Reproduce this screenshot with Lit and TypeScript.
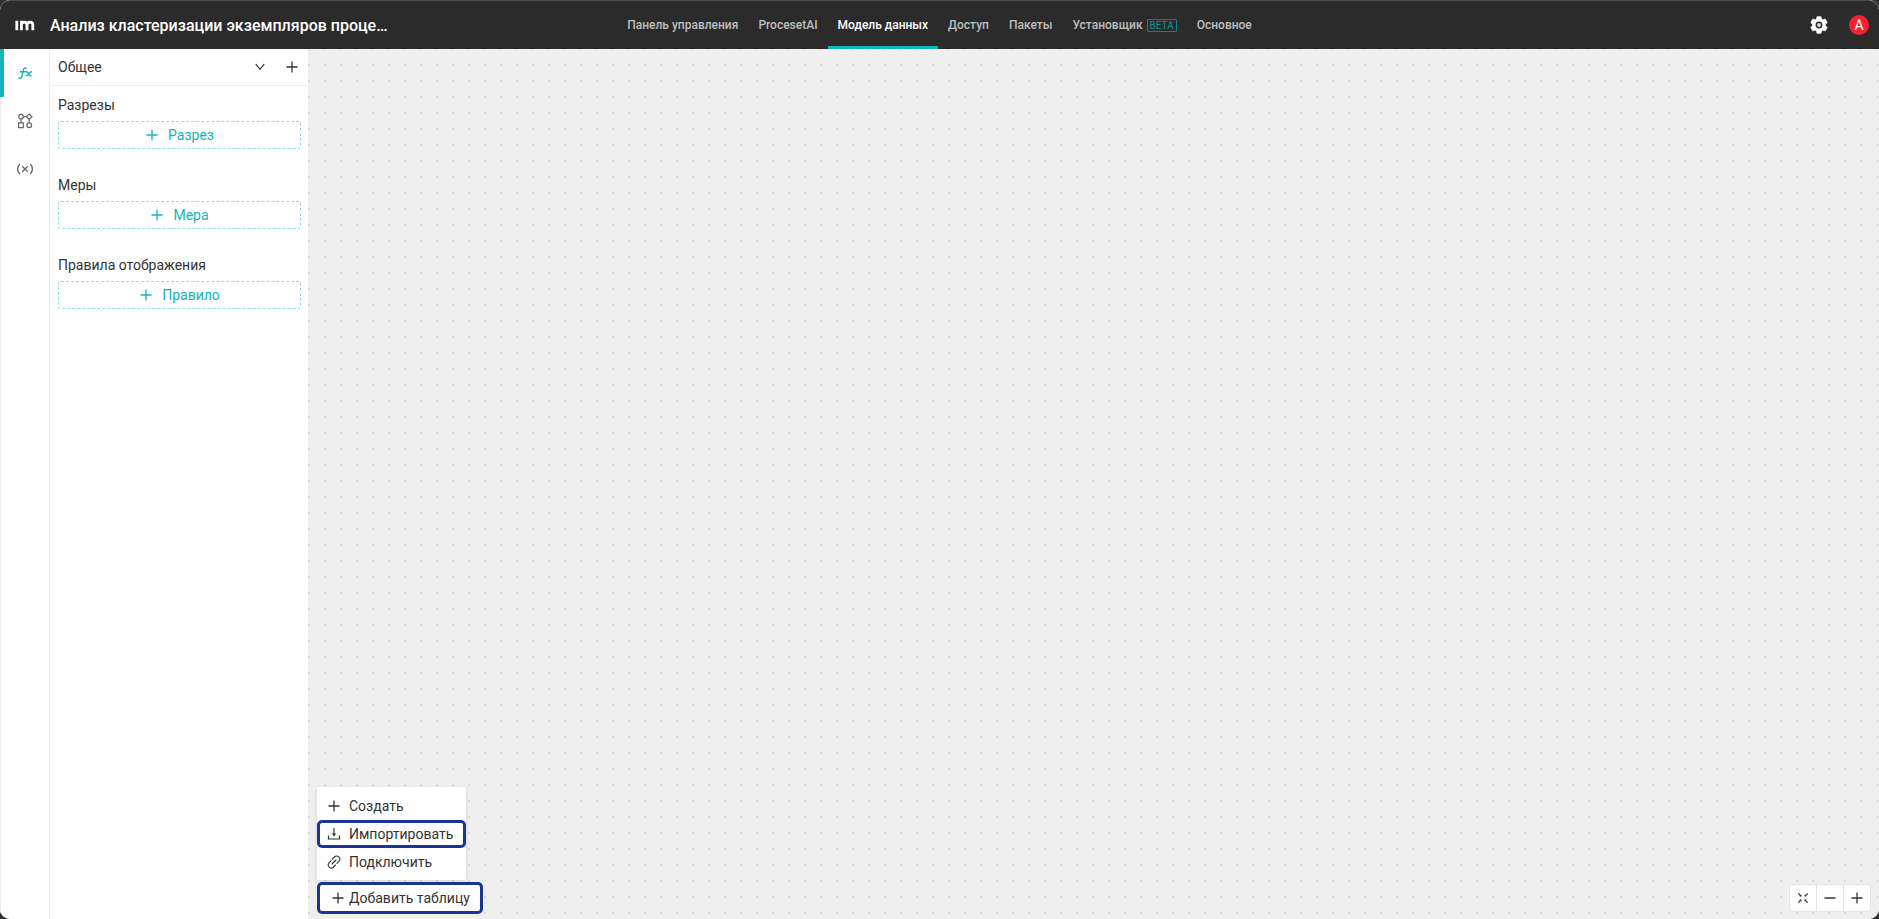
import { LitElement, html, css, svg } from "lit";
import { customElement, state } from "lit/decorators.js";

const plusIcon = svg`<svg class="icon" viewBox="0 0 14 14" fill="none" stroke="currentColor" stroke-width="1.3"><path d="M7 1.500v11M1.500 7h11"/></svg>`;
const chevronIcon = svg`<svg class="icon" viewBox="0 0 14 14" fill="none" stroke="currentColor" stroke-width="1.2"><path d="M2.800 4.200L7 9.400l4.200-5.200"/></svg>`;
const importIcon = svg`<svg class="icon" viewBox="0 0 14 14" fill="none" stroke="currentColor" stroke-width="1.2"><path d="M7 1v6.500M1.500 8.500v3.500h11v-3.500"/><path d="M4.800 6.600h4.400L7 9.400z" fill="currentColor" stroke="none"/></svg>`;
const linkIcon = svg`<svg class="icon" viewBox="0 0 14 14" fill="none" stroke="currentColor" stroke-width="1.1" stroke-linecap="round"><path d="M5.400 4l2-2a2.900 2.900 0 0 1 4.400 4.300L9.900 8.300M8.600 10l-2 2a2.900 2.900 0 0 1-4.400-4.300l1.900-2M5 9l4-4"/></svg>`;
const functionIcon = svg`<svg class="rail-icon" viewBox="0 0 16 16" fill="none" stroke="currentColor" stroke-width="1.400" stroke-linecap="round"><path d="M9.200 3.200C7.600 2.500 6.700 3.400 6.300 5.300L5 11.200C4.700 12.800 3.700 13.700 1.900 13M3.300 6.700h5"/><path d="M9.300 6.800c1.300-.3 1.700.5 2.200 2s.9 2.300 2.600 1.900M14.300 6.800c-1.900 0-3 3.900-5.200 3.900"/></svg>`;
const schemaIcon = svg`<svg class="rail-icon" viewBox="0 0 16 16" fill="none" stroke="currentColor" stroke-width="1.200"><circle cx="4" cy="3.700" r="2.300"/><path d="M12.200 1l2.700 2.700-2.700 2.700-2.700-2.700zM6.300 3.700h3.200M4 6v4M12.200 6.400v3.300M1.600 9.900h4.700v4.700H1.600z"/><circle cx="12.200" cy="12.200" r="2.400"/></svg>`;
const variableIcon = svg`<svg class="rail-icon" viewBox="0 0 16 16" fill="none" stroke="currentColor" stroke-width="1.300"><path d="M2.800 2.800C.1 6 .1 10 2.800 13.200M13.200 2.800c2.700 3.200 2.700 7.200 0 10.400M5.200 5.200l5.600 5.600M10.800 5.200l-5.600 5.600"/></svg>`;
const gearIcon = svg`<svg class="gear" viewBox="0 0 18 18"><path fill="currentColor" stroke="currentColor" stroke-width=".8" stroke-linejoin="round" d="M7 .8h4l.5 2.300 1.400.8 2.300-.8 2 3.500-1.800 1.600v1.600l1.800 1.600-2 3.500-2.300-.8-1.400.8-.5 2.300H7l-.5-2.300-1.400-.8-2.300.8-2-3.500 1.800-1.600V8.200L.8 6.600l2-3.500 2.300.8 1.400-.8z"/><circle cx="9" cy="9" r="2.700" fill="#ddd" stroke="#2b2b2b" stroke-width="1.500"/></svg>`;
const logoIcon = svg`<svg class="logo-mark" viewBox="0 0 20 11" fill="none" stroke="currentColor" stroke-width="2.800"><path d="M1.800 .8v9.400M6.400 10.200V.8M6.400 5c0-3.900 5.600-3.900 5.600 0v5.200M12 5c0-3.900 5.800-3.900 5.800 0v5.200"/></svg>`;
const fitIcon = svg`<svg class="icon" viewBox="0 0 14 14" fill="none" stroke="currentColor" stroke-width="1.200"><path d="M2.300 2.300l2.700 2.700M11.700 2.300L9 5M2.300 11.700L5 9M11.700 11.700L9 9"/><path fill="currentColor" stroke="none" d="M5.500 3.400v2.100H3.400zM8.500 3.400v2.100h2.100zM5.500 10.600V8.500H3.400zM8.500 10.600V8.500h2.100z"/></svg>`;
const minusIcon = svg`<svg class="icon" viewBox="0 0 14 14" fill="none" stroke="currentColor" stroke-width="1.400"><path d="M1.500 7h11"/></svg>`;

@customElement("app-root")
export class AppRoot extends LitElement {
  @state() private tab = "Модель данных";

  private tabs = [
    { name: "Панель управления" },
    { name: "ProcesetAI" },
    { name: "Модель данных" },
    { name: "Доступ" },
    { name: "Пакеты" },
    { name: "Установщик", badge: "BETA" },
    { name: "Основное" },
  ];

  private groups = [
    { title: "Разрезы", action: "Разрез" },
    { title: "Меры", action: "Мера" },
    { title: "Правила отображения", action: "Правило" },
  ];

  static styles = css`
    :host {
      display: block;
      height: 100vh;
      background: #303030;
      color: #333;
      font: 14px/20px Roboto, sans-serif;
    }
    * { box-sizing: border-box; }
    button {
      margin: 0;
      padding: 0;
      border: 0;
      background: none;
      color: inherit;
      font: inherit;
      cursor: pointer;
    }
    h1, h2 { margin: 0; font: inherit; }
    .window {
      display: flex;
      flex-direction: column;
      height: 100%;
      border-radius: 10px;
      overflow: hidden;
      background: #efefef;
    }
    .header {
      flex: none;
      display: grid;
      grid-template-columns: 1fr auto 1fr;
      align-items: center;
      height: 49px;
      border-top: 1px solid #4d4d4d;
      border-radius: 10px 10px 0 0;
      background: #2b2b2b;
      color: #fff;
    }
    .brand { display: flex; align-items: center; gap: 15px; padding-left: 15px; }
    .logo { display: flex; color: #fff; }
    .logo-mark { width: 20px; height: 11px; }
    .title { padding-top: 2px; font-size: 16px; font-weight: 500; line-height: 24px; white-space: nowrap; }
    .tabs { display: flex; align-self: stretch; }
    .tab {
      display: flex;
      align-items: center;
      gap: 4px;
      padding: 3px 10px 0;
      border-bottom: 3px solid transparent;
      color: #bfbfbf;
      font-size: 12px;
      font-weight: 500;
      text-decoration: none;
      white-space: nowrap;
    }
    .tab.active { border-color: #13b5b5; color: #fff; }
    .beta {
      padding: 0 2px;
      border: 1px solid #14807f;
      border-radius: 1px;
      color: #14908f;
      font-size: 10px;
      font-weight: 400;
      line-height: 11px;
    }
    .account { display: flex; justify-content: flex-end; align-items: center; gap: 21px; padding-right: 10px; }
    .account button { display: flex; align-items: center; justify-content: center; }
    .gear { width: 18px; height: 18px; }
    .avatar { width: 20px; height: 20px; border-radius: 50%; background: #f5222d; font-size: 14px; }
    .body { flex: 1; min-height: 0; display: flex; }
    .rail { flex: none; width: 50px; background: #fff; box-shadow: inset 1px 0 #ececec; border-right: 1px solid #efefef; }
    .rail button {
      display: flex;
      align-items: center;
      justify-content: center;
      width: 100%;
      height: 48px;
      color: #666;
    }
    .rail .active { border-left: 4px solid #13b5b5; padding-right: 4px; color: #13b5b5; }
    .rail-icon { width: 16px; height: 16px; }
    .icon { width: 14px; height: 14px; flex: none; }
    .side { flex: none; width: 258px; background: #fff; }
    .picker {
      display: flex;
      align-items: center;
      justify-content: space-between;
      height: 37px;
      padding: 0 9px 0 8px;
      border-bottom: 1px solid #efefef;
    }
    .picker-actions { display: flex; gap: 18px; }
    .picker-actions button { display: flex; }
    .groups { display: flex; flex-direction: column; gap: 26px; padding: 9px 7px 0 8px; }
    .group { display: flex; flex-direction: column; gap: 6px; }
    .add {
      display: flex;
      align-items: center;
      justify-content: center;
      gap: 9px;
      height: 28px;
      border: 1px dashed #8fdcdc;
      border-radius: 3px;
      color: #13b5b5;
    }
    .canvas {
      flex: 1;
      display: flex;
      align-items: flex-end;
      justify-content: space-between;
      padding: 0 8px 5px 9px;
      background: #efefef radial-gradient(circle at 1px 1px, #dadada 1px, transparent 1px) 0 -1px / 16px 16px;
    }
    .table-tools { display: flex; flex-direction: column; align-items: flex-start; gap: 2px; }
    .menu {
      display: flex;
      flex-direction: column;
      width: 149px;
      padding: 5px 0 4px;
      background: #fff;
      box-shadow: 0 1px 4px rgba(0, 0, 0, 0.12);
    }
    .menu button {
      display: flex;
      align-items: center;
      gap: 8px;
      height: 28px;
      padding: 0 10px;
      text-align: left;
    }
    .menu .marked { padding: 0 7px; border: 3px solid #1b3594; border-radius: 5px; }
    .add-table {
      display: flex;
      align-items: center;
      gap: 4px;
      height: 32px;
      padding: 0 10px 0 11px;
      border: 3px solid #1b3594;
      border-radius: 5px;
      background: #fff;
    }
    .zoom {
      display: flex;
      gap: 1px;
      margin-bottom: 2px;
      border: 1px solid #e4e4e4;
      border-radius: 4px;
      overflow: hidden;
      background: #e4e4e4;
    }
    .zoom button { display: flex; align-items: center; justify-content: center; width: 26px; height: 26px; background: #fff; }
  `;

  render() {
    return html`
      <div class="window">
        <header class="header">
          <div class="brand">
            <a class="logo" href="#" aria-label="im">${logoIcon}</a>
            <h1 class="title">Анализ кластеризации экземпляров проце…</h1>
          </div>
          <nav class="tabs">
            ${this.tabs.map(
              (t) => html`<a
                href="#"
                class="tab ${t.name === this.tab ? "active" : ""}"
                @click=${() => (this.tab = t.name)}
                ><span>${t.name}</span>${t.badge ? html`<span class="beta">${t.badge}</span>` : ""}</a
              >`
            )}
          </nav>
          <div class="account">
            <button aria-label="Настройки">${gearIcon}</button>
            <button class="avatar">A</button>
          </div>
        </header>
        <div class="body">
          <nav class="rail">
            <button class="active" aria-label="Функции">${functionIcon}</button>
            <button aria-label="Схема">${schemaIcon}</button>
            <button aria-label="Переменные">${variableIcon}</button>
          </nav>
          <aside class="side">
            <div class="picker">
              <span>Общее</span>
              <div class="picker-actions">
                <button aria-label="Развернуть">${chevronIcon}</button>
                <button aria-label="Добавить">${plusIcon}</button>
              </div>
            </div>
            <div class="groups">
              ${this.groups.map(
                (g) => html`<section class="group">
                  <h2>${g.title}</h2>
                  <button class="add">${plusIcon}<span>${g.action}</span></button>
                </section>`
              )}
            </div>
          </aside>
          <main class="canvas">
            <div class="table-tools">
              <div class="menu">
                <button>${plusIcon}<span>Создать</span></button>
                <button class="marked">${importIcon}<span>Импортировать</span></button>
                <button>${linkIcon}<span>Подключить</span></button>
              </div>
              <button class="add-table">${plusIcon}<span>Добавить таблицу</span></button>
            </div>
            <div class="zoom">
              <button aria-label="Вписать">${fitIcon}</button>
              <button aria-label="Уменьшить">${minusIcon}</button>
              <button aria-label="Увеличить">${plusIcon}</button>
            </div>
          </main>
        </div>
      </div>
    `;
  }
}
